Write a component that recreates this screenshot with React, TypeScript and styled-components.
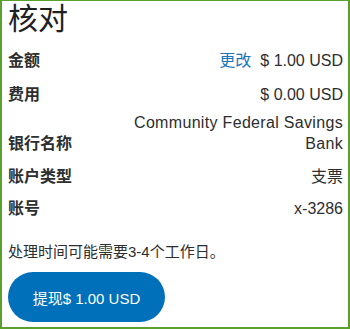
import React from "react";
import styled, { createGlobalStyle } from "styled-components";

const Global = createGlobalStyle`
  html, body { margin: 0; padding: 0; background: #ffffff; }
  body { font-family: "Liberation Sans", Arial, "Noto Sans CJK SC", sans-serif; color: #2c2e2f; }
  * { box-sizing: border-box; }
`;

const Frame = styled.div`
  width: 350px;
  height: 329px;
  border: 2px solid #5aa02c;
  border-top-width: 1px;
  padding: 0 5px 0 6px;
  display: flex;
  flex-direction: column;
  background: #ffffff;
  overflow: hidden;
`;

const Title = styled.h1`
  margin: 0;
  font-family: "Liberation Sans", Arial, "Noto Sans CJK SC", sans-serif;
  font-weight: 400;
  font-size: 30px;
  line-height: 36px;
  color: #1e2022;
`;

const List = styled.div`
  margin-top: 6px;
  display: flex;
  flex-direction: column;
`;

const Row = styled.div<{ $top: number; $bottom: number }>`
  display: flex;
  justify-content: space-between;
  align-items: flex-end;
  padding: ${(p) => p.$top}px 0 ${(p) => p.$bottom}px;
  font-size: 16px;
  line-height: 21px;
`;

const Label = styled.span`
  flex-shrink: 0;
  font-weight: 700;
  color: #2c2e2f;
`;

const Value = styled.span<{ $spread?: boolean }>`
  max-width: 65%;
  text-align: right;
  color: #2c2e2f;
  letter-spacing: ${(p) => (p.$spread ? "0.32px" : "0")};
`;

const Link = styled.a`
  color: #1b75bb;
  text-decoration: none;
  margin-right: 9px;
  cursor: pointer;
`;

const Note = styled.p`
  margin: 16.5px 0 0;
  font-size: 15px;
  line-height: 21px;
  color: #2c2e2f;
`;

const Button = styled.button`
  margin-top: 10.5px;
  align-self: flex-start;
  width: 157px;
  height: 50px;
  border: none;
  border-radius: 25px;
  background: #0070ba;
  color: #ffffff;
  font-family: "Liberation Sans", Arial, "Noto Sans CJK SC", sans-serif;
  font-size: 15px;
  padding: 0;
  cursor: pointer;
`;

export default function App() {
  return (
    <>
      <Global />
      <Frame>
        <Title>核对</Title>
        <List>
          <Row $top={6.5} $bottom={6.5}>
            <Label>金额</Label>
            <Value>
              <Link>更改</Link>$ 1.00 USD
            </Value>
          </Row>
          <Row $top={6.5} $bottom={6.5}>
            <Label>费用</Label>
            <Value>$ 0.00 USD</Value>
          </Row>
          <Row $top={0.5} $bottom={6.5}>
            <Label>银行名称</Label>
            <Value $spread>Community Federal Savings Bank</Value>
          </Row>
          <Row $top={5.5} $bottom={5.5}>
            <Label>账户类型</Label>
            <Value>支票</Value>
          </Row>
          <Row $top={5.5} $bottom={5.5}>
            <Label>账号</Label>
            <Value>x-3286</Value>
          </Row>
        </List>
        <Note>处理时间可能需要3-4个工作日。</Note>
        <Button>提现$ 1.00 USD</Button>
      </Frame>
    </>
  );
}
